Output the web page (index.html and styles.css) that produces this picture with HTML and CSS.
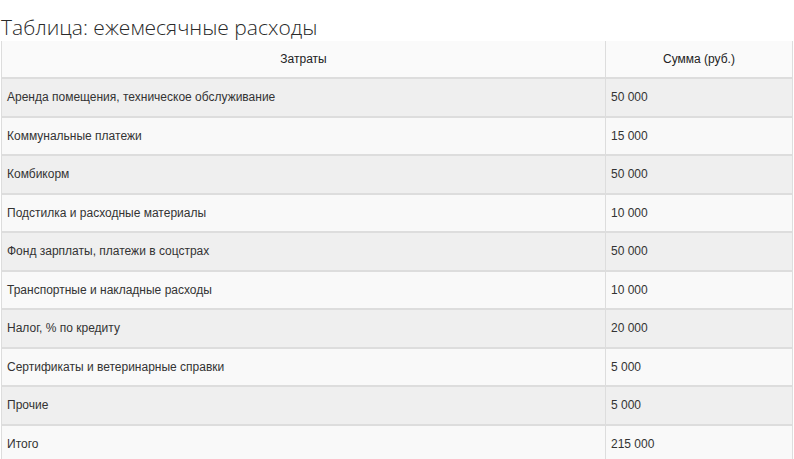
FILE: index.html
```html
<!DOCTYPE html>
<html lang="ru">
<head>
<meta charset="utf-8">
<link rel="stylesheet" href="styles.css">
</head>
<body>
<div class="wrap">
  <h3 class="title">Таблица: ежемесячные расходы</h3>
  <table class="costs">
    <thead>
      <tr><th class="c1">Затраты</th><th class="c2">Сумма (руб.)</th></tr>
    </thead>
    <tbody>
      <tr><td>Аренда помещения, техническое обслуживание</td><td>50 000</td></tr>
      <tr><td>Коммунальные платежи</td><td>15 000</td></tr>
      <tr><td>Комбикорм</td><td>50 000</td></tr>
      <tr><td>Подстилка и расходные материалы</td><td>10 000</td></tr>
      <tr><td>Фонд зарплаты, платежи в соцстрах</td><td>50 000</td></tr>
      <tr><td>Транспортные и накладные расходы</td><td>10 000</td></tr>
      <tr><td>Налог, % по кредиту</td><td>20 000</td></tr>
      <tr><td>Сертификаты и ветеринарные справки</td><td>5 000</td></tr>
      <tr><td>Прочие</td><td>5 000</td></tr>
      <tr><td>Итого</td><td>215 000</td></tr>
    </tbody>
  </table>
</div>
</body>
</html>
```

FILE: styles.css
```css
html, body {
  margin: 0;
  padding: 0;
  background: #fff;
}
.wrap {
  padding: 14px 1px 0 1px;
}
.title {
  margin: 0;
  font-family: "Open Sans", sans-serif;
  font-weight: 300;
  font-size: 21px;
  line-height: 27px;
  color: #2a2a2a;
}
.costs {
  width: 792px;
  border-collapse: collapse;
  font-family: "Liberation Sans", Arial, sans-serif;
  font-size: 12px;
  color: #333;
  border-left: 1px solid #ddd;
  border-right: 1px solid #ddd;
}
.costs th {
  font-weight: 400;
  color: #222;
  height: 36px;
  padding: 0 5px;
  text-align: center;
  background: #fafafa;
  border-bottom: 2px solid #ddd;
}
.costs th.c1 {
  width: 593px;
}
.costs td {
  height: 36.5px;
  padding: 0 5px;
  border-bottom: 2px solid #ddd;
  text-align: left;
}
.costs td:first-child, .costs th:first-child {
  border-right: 1px solid #ddd;
}
.costs tbody tr:nth-child(odd) td {
  background: #efefef;
}
.costs tbody tr:nth-child(even) td {
  background: #f9f9f9;
}
```
